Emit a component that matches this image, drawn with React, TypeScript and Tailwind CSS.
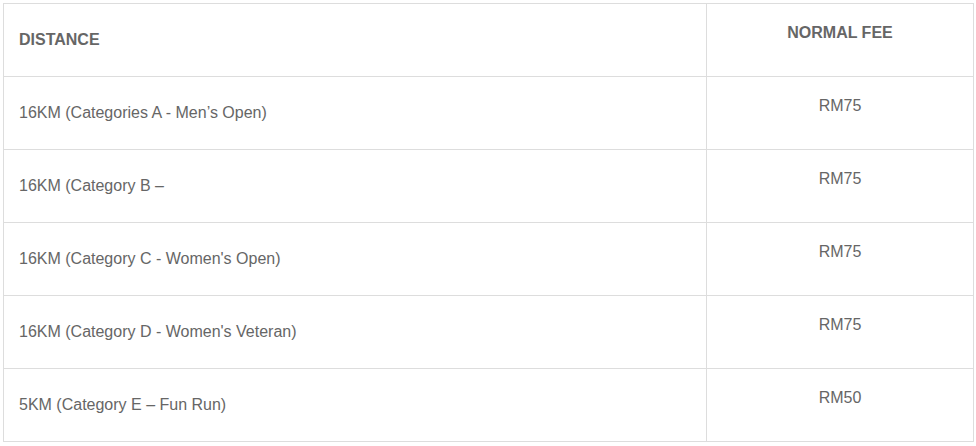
import React from "react";

const rows = [
  { distance: "16KM (Categories A - Men’s Open)", fee: "RM75" },
  { distance: "16KM (Category B –", fee: "RM75" },
  { distance: "16KM (Category C - Women's Open)", fee: "RM75" },
  { distance: "16KM (Category D - Women's Veteran)", fee: "RM75" },
  { distance: "5KM (Category E – Fun Run)", fee: "RM50" },
];

export default function App() {
  return (
    <div className="min-h-screen bg-white p-[3px] font-['Liberation_Sans',Arial,sans-serif] text-[#666]">
      <table className="w-[971px] border-collapse border border-[#ddd] table-fixed">
        <colgroup>
          <col className="w-[703px]" />
          <col />
        </colgroup>
        <thead>
          <tr className="h-[73px]">
            <th className="border border-[#ddd] px-[15px] text-left align-middle text-[16px] font-bold">
              DISTANCE
            </th>
            <th className="border border-[#ddd] px-[15px] pt-[19px] text-center align-top text-[16px] font-bold leading-[20px]">
              NORMAL FEE
            </th>
          </tr>
        </thead>
        <tbody>
          {rows.map((r) => (
            <tr key={r.distance} className="h-[73px]">
              <td className="border border-[#ddd] px-[15px] align-middle text-[16px]">
                {r.distance}
              </td>
              <td className="border border-[#ddd] px-[15px] pt-[19px] text-center align-top text-[16px] leading-[20px]">
                {r.fee}
              </td>
            </tr>
          ))}
        </tbody>
      </table>
    </div>
  );
}
